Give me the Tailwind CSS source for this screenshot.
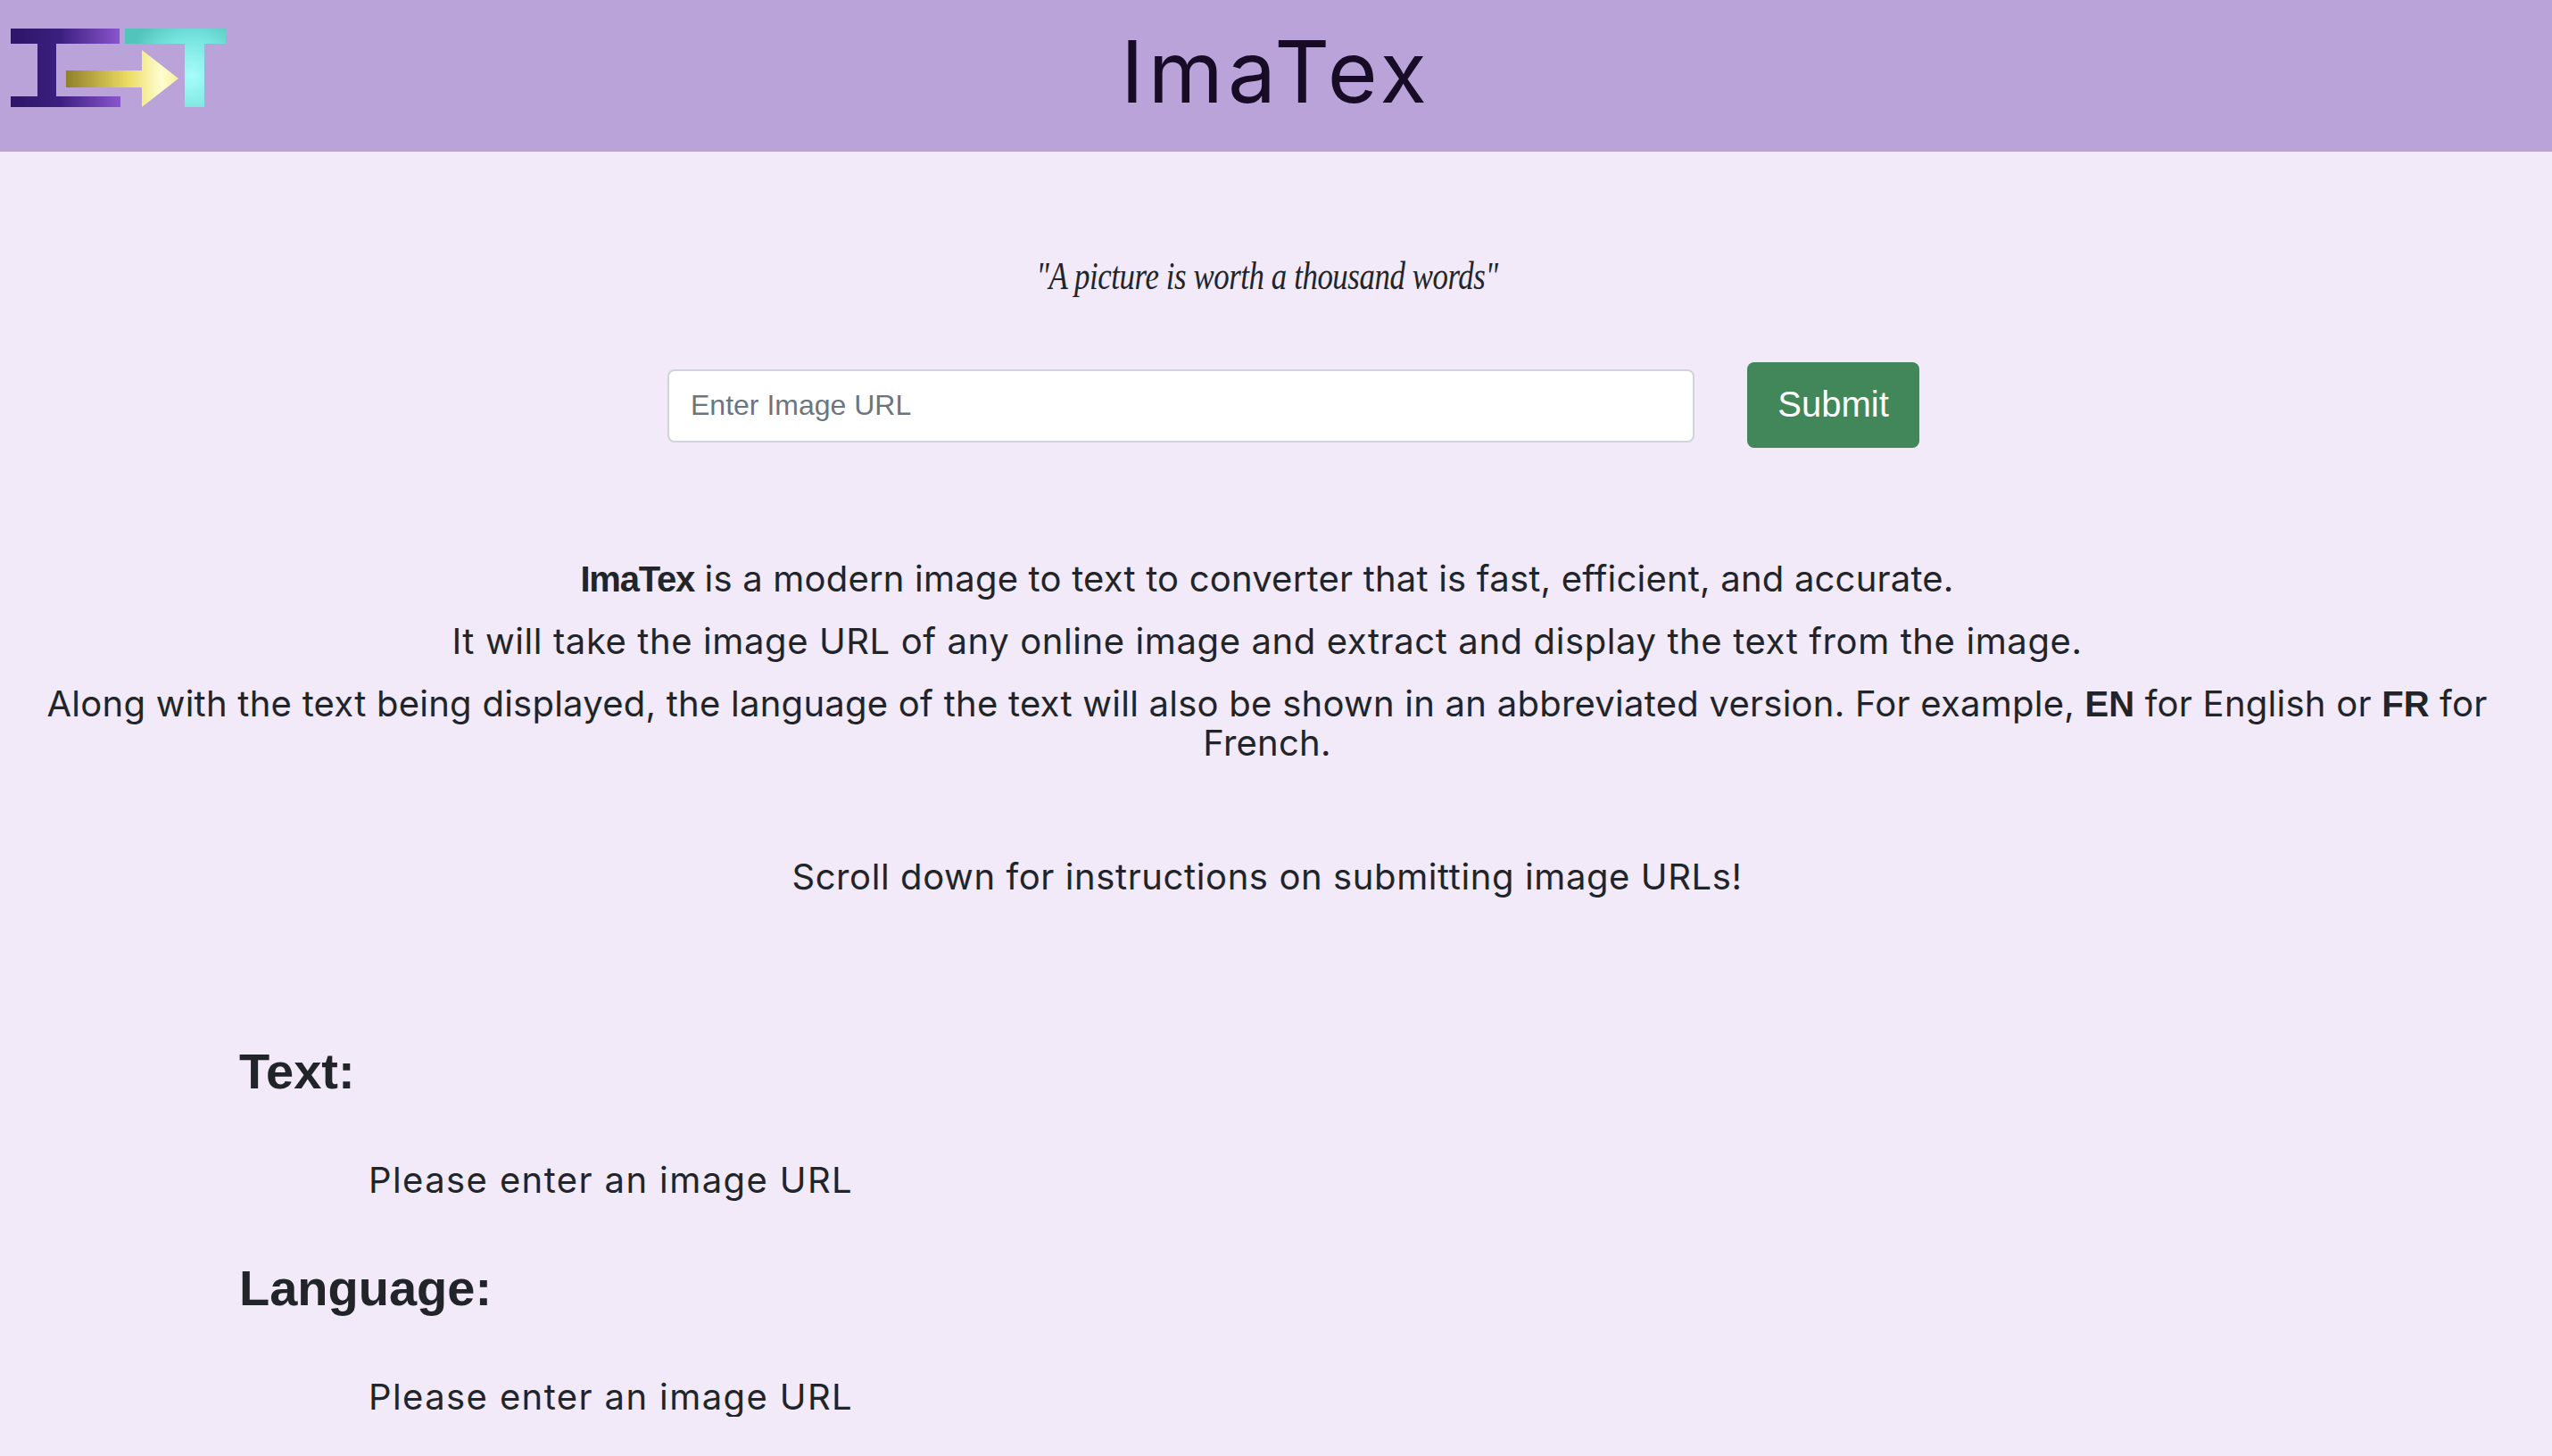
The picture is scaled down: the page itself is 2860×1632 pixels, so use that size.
<!DOCTYPE html>
<html lang="en">
<head>
  <meta charset="UTF-8">
  <meta name="viewport" content="width=device-width, initial-scale=1.0">
  <title>ImaTex</title>
  <script src="https://cdn.jsdelivr.net/npm/@tailwindcss/browser@4"></script>
</head>
<body class="bg-[#f2e9f9] text-[#212529] font-['Inter',sans-serif] text-[40px] leading-[44px] tracking-[0.6px]">

<header class="relative h-[170px] bg-[#b9a3d8] flex justify-center">
  <svg class="absolute left-0 top-0" width="300" height="170" viewBox="0 0 300 170" xmlns="http://www.w3.org/2000/svg">
    <defs>
      <linearGradient id="grad-i" x1="12" y1="0" x2="135" y2="0" gradientUnits="userSpaceOnUse">
        <stop offset="0" stop-color="#2d1566"/>
        <stop offset="0.45" stop-color="#3c1f80"/>
        <stop offset="1" stop-color="#8a55cc"/>
      </linearGradient>
      <linearGradient id="grad-arrow" x1="74" y1="0" x2="200" y2="0" gradientUnits="userSpaceOnUse">
        <stop offset="0" stop-color="#8f7f2a"/>
        <stop offset="0.55" stop-color="#ecdc62"/>
        <stop offset="0.85" stop-color="#fffdd0"/>
        <stop offset="1" stop-color="#f6ee9c"/>
      </linearGradient>
      <radialGradient id="grad-t" cx="215" cy="85" r="75" gradientUnits="userSpaceOnUse">
        <stop offset="0" stop-color="#a8fdfa"/>
        <stop offset="0.6" stop-color="#75e3dd"/>
        <stop offset="1" stop-color="#52c4bb"/>
      </radialGradient>
    </defs>
    <path fill="url(#grad-i)" d="M12 32H134V49H63V108H135V120H12V108H42V49H12Z"/>
    <path fill="url(#grad-t)" d="M140 32H253V49H229V120H207V49H140Z"/>
    <path fill="url(#grad-arrow)" d="M74 79H159V56L200 88L159 120V98H74Z"/>
  </svg>
  <h1 class="text-[#170b26] text-[96px] leading-[160px] tracking-[5px]">ImaTex</h1>
</header>

<main class="pr-[20px]">
  <p class="mt-[110px] text-center font-['Liberation_Serif',serif] italic text-[44px] leading-[60px] tracking-[-0.5px] scale-x-[0.79]">"A picture is worth a thousand words"</p>

  <form class="mt-[66px] pl-[748px] flex items-center gap-[59px]">
    <input type="text" placeholder="Enter Image URL" class="mt-[2px] w-[1151px] h-[82px] bg-white border-2 border-[#ced4da] rounded-[8px] px-[24px] pb-[2px] font-['Liberation_Sans',sans-serif] text-[32px] tracking-normal placeholder:text-[#6c757d]">
    <button type="button" class="w-[193px] h-[96px] pb-[2px] bg-[#41875a] text-white rounded-[8px] font-['Liberation_Sans',sans-serif] text-[40px] tracking-normal">Submit</button>
  </form>

  <div class="mt-[125px] text-center">
    <p class="tracking-[0.2px]"><b class="font-['Liberation_Sans',sans-serif] tracking-[-1.2px]">ImaTex</b> is a modern image to text to converter that is fast, efficient, and accurate.</p>
    <p class="mt-[26px]">It will take the image URL of any online image and extract and display the text from the image.</p>
    <p class="mt-[26px] px-[40px] tracking-[0.25px]">Along with the text being displayed, the language of the text will also be shown in an abbreviated version. For example, <b class="font-['Liberation_Sans',sans-serif] tracking-normal">EN</b> for English or <b class="font-['Liberation_Sans',sans-serif] tracking-normal">FR</b> for French.</p>
    <p class="mt-[106px]">Scroll down for instructions on submitting image URLs!</p>
  </div>

  <section class="mt-[162px] pl-[268px]">
    <h3 class="font-['Liberation_Sans',sans-serif] font-bold text-[56px] leading-[67px] tracking-normal">Text:</h3>
    <p class="mt-[67px] pl-[145px] tracking-[1.4px]">Please enter an image URL</p>
    <h3 class="mt-[65px] font-['Liberation_Sans',sans-serif] font-bold text-[56px] leading-[67px] tracking-normal">Language:</h3>
    <p class="mt-[67px] pl-[145px] tracking-[1.4px]">Please enter an image URL</p>
  </section>
</main>

</body>
</html>
